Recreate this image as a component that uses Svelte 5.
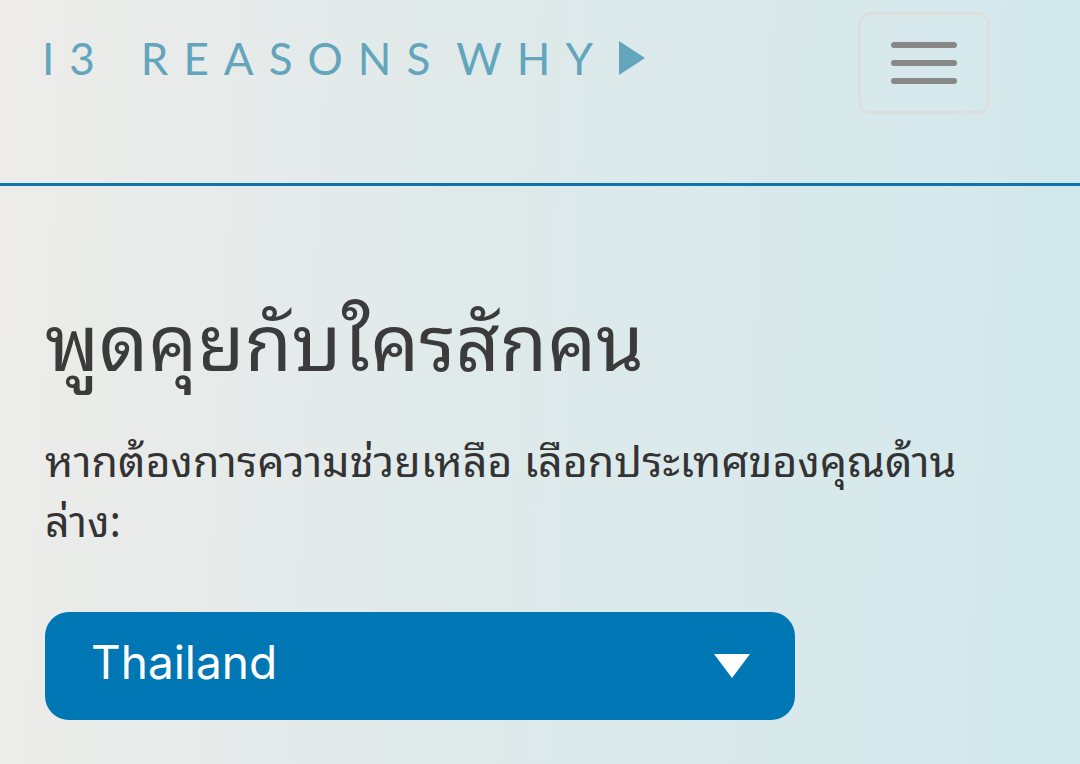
<script lang="ts">
	const countries = ['Thailand', 'Singapore', 'Malaysia', 'Japan'];
	const wordmark = ['I3', 'REASONS', 'WHY'];

	let country = $state('Thailand');
	let menuOpen = $state(false);
</script>

<header>
	<a class="logo" href="/" aria-label="13 Reasons Why">
		{#each wordmark as word}
			<span class="word">
				{#each word as letter}<span>{letter}</span>{/each}
			</span>
		{/each}
		<svg width="26" height="34" viewBox="0 0 26 34" aria-hidden="true">
			<path d="M0 0L26 17L0 34Z" fill="currentColor" />
		</svg>
	</a>
	<button
		class="toggle"
		type="button"
		aria-label="Menu"
		aria-expanded={menuOpen}
		onclick={() => (menuOpen = !menuOpen)}
	>
		{#each Array(3) as _}
			<span class="bar"></span>
		{/each}
	</button>
</header>

<main>
	<h1>พูดคุยกับใครสักคน</h1>
	<label for="country">หากต้องการความช่วยเหลือ เลือกประเทศของคุณด้านล่าง:</label>
	<div class="picker">
		<select id="country" bind:value={country}>
			{#each countries as name}
				<option>{name}</option>
			{/each}
		</select>
		<svg width="36" height="24" viewBox="0 0 36 24" aria-hidden="true">
			<path d="M0 0H36L18 24Z" fill="#fff" />
		</svg>
	</div>
</main>

<style>
	:global(body) {
		min-height: 100vh;
		background: linear-gradient(93deg, #edecea 0%, #dfeaea 45%, #d2e8ec 100%);
		color: #3b3b3b;
		font-family: 'Noto Sans Thai Looped', 'Noto Looped Thai', Loma, 'Noto Sans', sans-serif;
	}
	header {
		display: flex;
		justify-content: space-between;
		align-items: flex-start;
		box-sizing: border-box;
		height: 186px;
		padding: 12px 90px 0 42px;
		border-bottom: 3px solid #0f73ae;
	}
	.logo {
		display: flex;
		align-items: center;
		gap: 26px;
		margin-top: 24px;
		color: #62a5bd;
		font: 44px/44px Lato, sans-serif;
		text-decoration: none;
	}
	.word {
		display: flex;
		gap: 15px;
	}
	.word:first-child {
		margin-right: 20px;
	}
	.toggle {
		display: flex;
		flex-direction: column;
		align-items: center;
		justify-content: center;
		gap: 12px;
		box-sizing: border-box;
		width: 132px;
		height: 102px;
		padding: 0;
		border: 3px solid #dcdfde;
		border-radius: 12px;
		background: none;
	}
	.bar {
		width: 66px;
		height: 6px;
		border-radius: 3px;
		background: #888;
	}
	main {
		padding: 96px 90px 44px 45px;
	}
	h1 {
		margin: 0;
		font-size: 77px;
		font-weight: 400;
		line-height: 110px;
	}
	label {
		display: block;
		margin-top: 36px;
		color: #333;
		font-size: 43px;
		line-height: 60px;
	}
	.picker {
		position: relative;
		max-width: 750px;
		margin-top: 64px;
	}
	select {
		appearance: none;
		width: 100%;
		height: 108px;
		padding: 0 90px 8px 46px;
		border: 0;
		border-radius: 24px;
		background: #0077b5;
		color: #fff;
		font: 46px Inter, sans-serif;
	}
	.picker svg {
		position: absolute;
		top: 42px;
		right: 45px;
		pointer-events: none;
	}
</style>
